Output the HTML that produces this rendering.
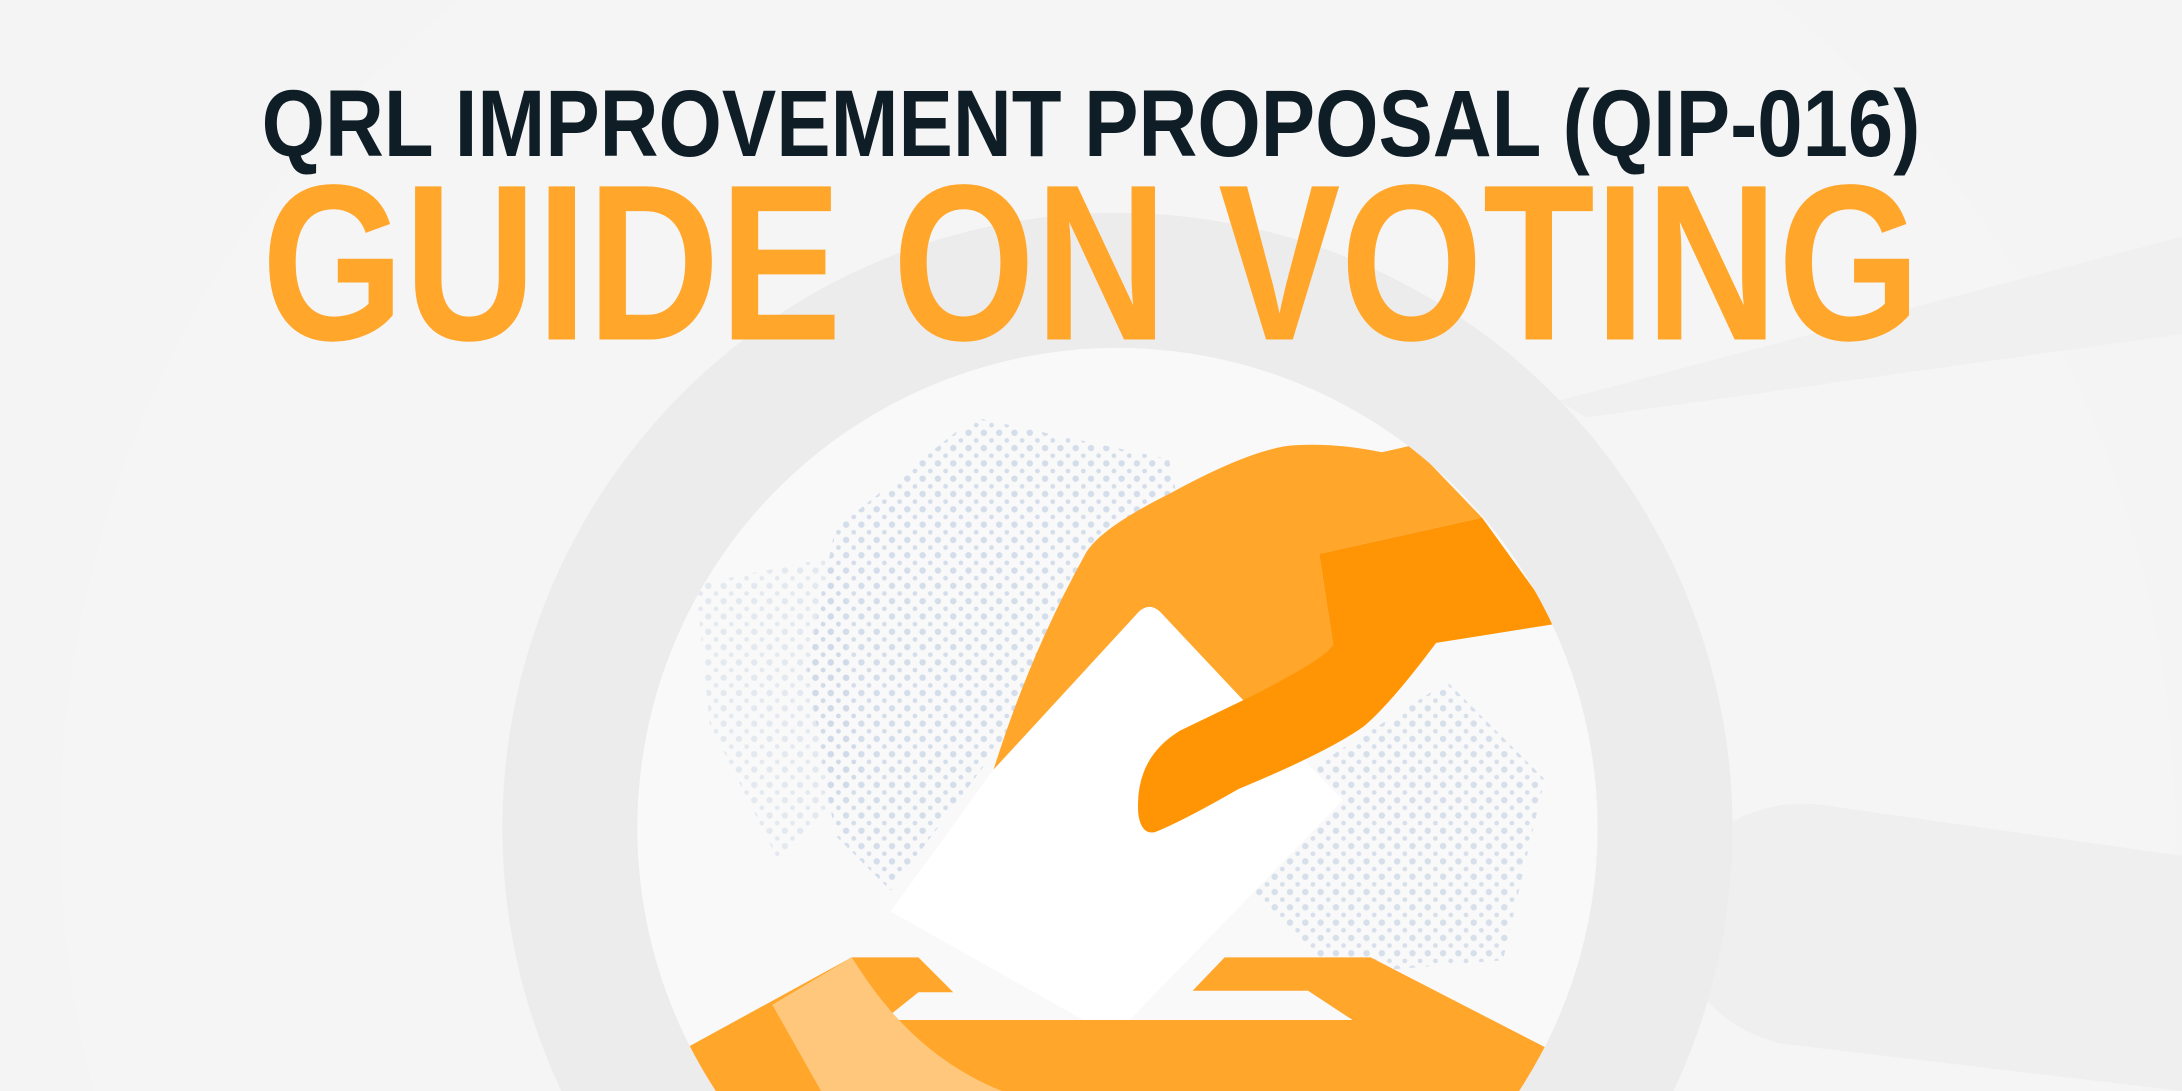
<!DOCTYPE html>
<html><head><meta charset="utf-8"><style>
html,body{margin:0;padding:0;background:#f4f4f4;overflow:hidden;width:2182px;height:1091px}
svg{display:block}
</style></head><body>
<svg width="2182" height="1091" viewBox="0 0 1568 784" xmlns="http://www.w3.org/2000/svg">
<defs>
<clipPath id="c"><circle cx="803" cy="595" r="345"/></clipPath>
<clipPath id="s"><rect x="0" y="0" width="1568" height="733"/></clipPath>
<pattern id="d" width="11" height="11" patternUnits="userSpaceOnUse"><circle cx="3" cy="3" r="2.3" fill="#cbd6e6"/><circle cx="8.5" cy="8.5" r="1.7" fill="#cbd6e6"/></pattern>
</defs>
<rect width="1568" height="784" fill="#f4f4f4"/>
<circle cx="803" cy="595" r="760" fill="#f5f5f5"/>
<path d="M1120 288 L1568 170 L1568 240 L1140 300Z" fill="#f0f0f0"/>
<path d="M1230 600 Q1270 570 1320 580 L1568 615 L1568 784 L1280 750 Q1240 740 1220 710Z" fill="#efefef"/>
<circle cx="803" cy="595" r="442" fill="#ececec"/>
<circle cx="803" cy="595" r="345" fill="#f9f9f9"/>
<g clip-path="url(#c)">
<path d="M600 380 L700 300 L840 330 L860 420 L760 480 L700 560 L640 640 L600 600 L580 480Z" fill="url(#d)" opacity="0.8"/>
<path d="M500 420 L600 400 L620 560 L560 620 L510 520Z" fill="url(#d)" opacity="0.45"/>
<path d="M930 560 L1040 490 L1110 560 L1080 690 L960 700 L900 640Z" fill="url(#d)" opacity="0.75"/>
<!-- ballot -->
<path d="M818 440 Q826 432 834 440 L965 575 L800 745 L640 655 L714 553Z" fill="#ffffff" clip-path="url(#s)"/>
<!-- sleeve light -->
<path d="M780 398 Q790 380 840 355 Q900 322 930 320 Q960 318 993 325 L1015 320 L1065 372 L948 398 L958 463 Q950 480 897 507 L834 440 Q826 432 818 440 L714 553 Q740 470 780 398Z" fill="#ffa62b"/>
<!-- hand dark -->
<path d="M948 398 L1065 372 L1120 448 L1032 462 Q1000 505 980 522 Q955 540 890 567 Q850 590 830 598 Q820 600 818 585 Q815 545 848 525 L900 500 Q955 472 958 463Z" fill="#ff9505"/>
<!-- box -->
<path d="M495 752 L612 688 L660 688 L685 713 L660 713 L635 733 L972 733 L940 712 L857 712 L880 688 L985 688 L1115 755 L1100 784 L505 784Z" fill="#ffa62b"/>
<path d="M555 722 L612 688 L620 700 Q660 760 720 784 L590 784Z" fill="#ffc77c"/>
</g>
<g font-family="Liberation Sans, sans-serif" font-weight="bold">
<text x="188" y="112" font-size="68" fill="#0f1e26" textLength="1192" lengthAdjust="spacingAndGlyphs">QRL IMPROVEMENT PROPOSAL (QIP-016)</text>
<text x="188" y="244" font-size="160" fill="#ffa62b" textLength="1192" lengthAdjust="spacingAndGlyphs">GUIDE ON VOTING</text>
</g>
</svg>
</body></html>
